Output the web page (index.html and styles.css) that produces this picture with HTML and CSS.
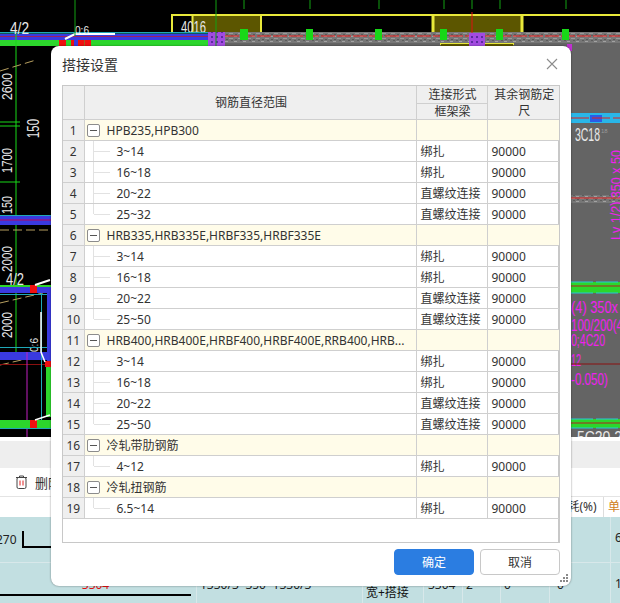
FILE: index.html
```html
<!DOCTYPE html>
<html lang="zh-CN">
<head>
  <meta charset="UTF-8">
  <meta name="viewport" content="width=device-width, initial-scale=1.0">
  <title>搭接设置</title>
  <link rel="stylesheet" href="styles.css">
</head>
<body>
  <div class="app">
    <svg class="cad" width="620" height="437" viewBox="0 0 620 437">
      <defs>
        <pattern id="hatch" width="9" height="5" patternUnits="userSpaceOnUse">
          <rect width="9" height="5" fill="#777"/>
          <rect x="0" y="1" width="3" height="1" fill="#a2a2a2"/>
          <rect x="4" y="3" width="4" height="1" fill="#9a9a9a"/>
          <rect x="6" y="0" width="2" height="1" fill="#5c5c5c"/>
          <rect x="1" y="4" width="2" height="1" fill="#585858"/>
        </pattern>
        <pattern id="violet" width="5" height="5" patternUnits="userSpaceOnUse">
          <rect width="5" height="5" fill="#a24be0"/>
          <rect x="1" y="1" width="2" height="2" fill="#5c2ba0"/>
        </pattern>
      </defs>
      <rect x="0" y="0" width="620" height="437" fill="#000"/>
      <rect x="225" y="43" width="395" height="394" fill="#646464"/>
      <rect x="567" y="44" width="5" height="7" fill="#c030d0"/>

      <!-- top beams -->
      <rect x="262" y="14" width="358" height="2" fill="#e8e83a"/>
      <rect x="171" y="14" width="91" height="2" fill="#e8e83a"/>
      <rect x="193" y="16" width="68" height="16" fill="#5c5600"/>
      <path d="M172 32V15M192.500 32V15M261 32V15" stroke="#e8e83a" stroke-width="2" fill="none"/>
      <rect x="433" y="16" width="89" height="16" fill="#5c5600"/>
      <path d="M433 32V14M522 32V14" stroke="#e8e83a" stroke-width="3" fill="none"/>
      <rect x="440" y="43" width="74" height="2" fill="#e8e83a"/>
      <rect x="441" y="44" width="72" height="2" fill="#5c5600"/>
      <text class="cad-text" x="181" y="33" font-size="16" textLength="25" lengthAdjust="spacingAndGlyphs">4016</text>

      <!-- top left band -->
      <rect x="0" y="32" width="208" height="1.500" fill="#1fa8b8"/>
      <rect x="0" y="34" width="208" height="6" fill="#3a3ae0"/>
      <rect x="0" y="36" width="208" height="1" fill="#a02060"/>
      <rect x="0" y="40" width="208" height="6" fill="#2cd62c"/>
      <rect x="59" y="40" width="32" height="6" fill="#f01010"/>
      <rect x="66" y="40" width="5" height="6" fill="#2cd62c"/>
      <rect x="74" y="40" width="4" height="6" fill="#3a3ae0"/>
      <rect x="84" y="40" width="1" height="6" fill="#a06020"/>
      <path d="M65 39L75 34H115" stroke="#fff" stroke-width="2" fill="none"/>
      <text class="cad-text" x="10" y="34" font-size="17" textLength="19" lengthAdjust="spacingAndGlyphs">4/2</text>
      <text class="cad-text" x="75" y="34" font-size="10" textLength="14" lengthAdjust="spacingAndGlyphs">0:6</text>

      <!-- hatched beam -->
      <rect x="208" y="32" width="17" height="14" fill="url(#violet)"/>
      <rect x="225" y="32" width="395" height="11" fill="url(#hatch)"/>
      <path d="M225 36H620" stroke="#f02020" stroke-width="1" stroke-dasharray="14 2"/>
      <rect x="469" y="33" width="16" height="13" fill="url(#violet)"/>
      <path d="M472 12V33" stroke="#e01010" stroke-width="1"/>
      <g fill="#18d818">
        <rect x="240" y="29" width="8" height="11"/>
        <rect x="306" y="29" width="7" height="11"/>
        <rect x="375" y="29" width="7" height="11"/>
        <rect x="440" y="29" width="7" height="11"/>
        <rect x="496" y="29" width="7" height="11"/>
        <rect x="562" y="29" width="7" height="11"/>
      </g>
      <g stroke="#12a012" stroke-width="1">
        <path d="M75 0V36M216 0V46M244 0V9M310 0V9M379 0V9M444 0V9M472 0V9M500 0V9M566 0V9"/>
      </g>

      <!-- left column -->
      <path d="M16 34V353" stroke="#18d818" stroke-width="1"/>
      <path d="M0 122H20M0 126H20M0 182H20" stroke="#18d818" stroke-width="1"/>
      <rect x="0" y="215" width="51" height="10" fill="#3a3ae0"/>
      <rect x="0" y="215" width="51" height="1" fill="#1fa8b8"/>
      <rect x="0" y="219" width="51" height="2" fill="#7a209a"/>
      <path d="M0 230H51" stroke="#b8a060" stroke-width="1" stroke-dasharray="9 4"/>
      <path d="M0 71L36 60" stroke="#b8a060" stroke-width="1" stroke-dasharray="9 4"/>
      <path d="M0 303L43 293M0 365L30 358" stroke="#b8a060" stroke-width="1" stroke-dasharray="9 4"/>
      <text class="cad-text" transform="translate(12 100) rotate(-90)" font-size="14" textLength="27" lengthAdjust="spacingAndGlyphs">2600</text>
      <text class="cad-text" transform="translate(39 138) rotate(-90)" font-size="17" textLength="19" lengthAdjust="spacingAndGlyphs">150</text>
      <text class="cad-text" transform="translate(12 173) rotate(-90)" font-size="14" textLength="25" lengthAdjust="spacingAndGlyphs">1700</text>
      <text class="cad-text" transform="translate(12 214) rotate(-90)" font-size="14" textLength="18" lengthAdjust="spacingAndGlyphs">150</text>
      <text class="cad-text" transform="translate(12 272) rotate(-90)" font-size="14" textLength="26" lengthAdjust="spacingAndGlyphs">2000</text>
      <text class="cad-text" transform="translate(12 338) rotate(-90)" font-size="14" textLength="26" lengthAdjust="spacingAndGlyphs">2000</text>
      <text class="cad-text" x="6" y="285" font-size="17" textLength="18" lengthAdjust="spacingAndGlyphs">4/2</text>
      <text class="cad-text" transform="translate(38 352) rotate(-90)" font-size="10" textLength="14" lengthAdjust="spacingAndGlyphs">0:6</text>
      <rect x="0" y="285" width="51" height="2" fill="#2cd62c"/>
      <rect x="0" y="287" width="51" height="6" fill="#3a3ae0"/>
      <rect x="0" y="294" width="51" height="1" fill="#1fa8b8"/>
      <rect x="30" y="285" width="7" height="8" fill="#f01010"/>
      <path d="M35 285L50 280" stroke="#fff" stroke-width="2"/>
      <rect x="0" y="347" width="51" height="1" fill="#1fa8b8"/>
      <rect x="0" y="352" width="51" height="8" fill="#3a3ae0"/>
      <rect x="0" y="364" width="51" height="1" fill="#8a1010"/>
      <path d="M41.500 293V420" stroke="#1fa8b8" stroke-width="1"/>
      <rect x="47" y="293" width="4" height="68" fill="#3a3ae0"/>
      <rect x="46" y="367" width="5" height="50" fill="#2cd62c"/>
      <rect x="45" y="361" width="6" height="6" fill="#f01010"/>
      <path d="M41 312V352L45 362" stroke="#fff" stroke-width="1.500" fill="none"/>
      <path d="M27 352V437" stroke="#c020c0" stroke-width="1"/>
      <rect x="0" y="420" width="51" height="8" fill="#2cd62c"/>
      <rect x="0" y="428" width="51" height="1" fill="#1fa8b8"/>
      <rect x="30" y="420" width="7" height="8" fill="#f01010"/>
      <path d="M35 420L50 415" stroke="#fff" stroke-width="1.500"/>

      <!-- right column -->
      <rect x="571" y="113" width="49" height="10" fill="#29b6e8"/>
      <rect x="590" y="115" width="12" height="7" fill="#2a5ce8"/>
      <path d="M571 118H620" stroke="#e02020" stroke-width="1" stroke-dasharray="18 3"/>
      <text class="cad-text" x="575" y="141" font-size="18" textLength="25" lengthAdjust="spacingAndGlyphs">3C18</text>
      <text class="cad-text dim" x="601" y="133" font-size="6">18</text>
      <rect x="571" y="195" width="49" height="8" fill="url(#hatch)"/>
      <path d="M571 198H620" stroke="#e02020" stroke-width="1"/>
      <text class="cad-pink" transform="translate(621 240) rotate(-90)" font-size="14" textLength="90" lengthAdjust="spacingAndGlyphs">Lv 1/2) 350 x 50</text>
      <rect x="571" y="282" width="49" height="11" fill="#2cd62c"/>
      <path d="M571 282H620M571 293H620" stroke="#26c8d8" stroke-width="1" stroke-dasharray="22 3"/>
      <path d="M571 286H620" stroke="#b02020" stroke-width="1"/>
      <text class="cad-pink" x="571" y="313" font-size="17" textLength="47" lengthAdjust="spacingAndGlyphs">(4) 350x</text>
      <text class="cad-pink" x="571" y="331" font-size="17" textLength="52" lengthAdjust="spacingAndGlyphs">100/200(4</text>
      <text class="cad-pink" x="571" y="346" font-size="17" textLength="34" lengthAdjust="spacingAndGlyphs">0;4C20</text>
      <text class="cad-pink" x="571" y="366" font-size="17" textLength="10" lengthAdjust="spacingAndGlyphs">12</text>
      <path d="M571 364H620" stroke="#8a1010" stroke-width="1"/>
      <text class="cad-pink" x="571" y="385" font-size="17" textLength="37" lengthAdjust="spacingAndGlyphs">-0.050)</text>
      <rect x="571" y="419" width="49" height="9" fill="#2cd62c"/>
      <path d="M571 419H620M571 428H620" stroke="#26c8d8" stroke-width="1" stroke-dasharray="22 3"/>
      <path d="M571 423H620" stroke="#b02020" stroke-width="1"/>
      <text class="cad-text" x="577" y="443" font-size="17" textLength="45" lengthAdjust="spacingAndGlyphs">5C20 2</text>
    </svg>

    <div class="tabbar"></div>
    <div class="toolbar">
      <svg class="trash" width="13" height="14" viewBox="0 0 13 14">
        <path d="M1 2.500H12M4.500 2.500V1H8.500V2.500" stroke="#444" fill="none"/>
        <rect x="2" y="2.500" width="9" height="11" rx="1.500" stroke="#444" fill="none"/>
        <path d="M5 5.500V10.500M8 5.500V10.500" stroke="#e02020" fill="none"/>
      </svg>
      <span>删除</span>
    </div>
    <div class="grid-head">
      <span class="c-loss">损耗(%)</span>
      <span class="c-last">单</span>
    </div>
    <div class="grid-row">
      <div class="c-sketch"><span>270</span><i class="elbow"></i></div>
      <div class="c-last c-num">6</div>
    </div>
    <div class="grid-row">
      <div class="c-drawn"><span>3304</span></div>
      <div class="c-size">1330/3*350*1330/3</div>
      <div class="c-type">宽+搭接</div>
      <div class="c-a">3304</div>
      <div class="c-b">2</div>
      <div class="c-c">0</div>
      <div class="c-d">0</div>
      <div class="c-last c-num">1</div>
    </div>
  </div>

  <div class="dialog">
    <div class="dialog-title">
      <span>搭接设置</span>
      <svg class="close" width="12" height="12" viewBox="0 0 12 12">
        <path d="M1 1L11 11M11 1L1 11" stroke="#8c8c8c" stroke-width="1.100" fill="none"/>
      </svg>
    </div>
    <div class="table-wrap">
      <table class="rebar-table">
        <colgroup>
          <col class="col-no"><col class="col-range"><col class="col-type"><col class="col-len">
        </colgroup>
        <thead>
          <tr class="head-top">
            <th rowspan="2"></th>
            <th rowspan="2">钢筋直径范围</th>
            <th>连接形式</th>
            <th rowspan="2">其余钢筋定尺</th>
          </tr>
          <tr class="head-sub"><th>框架梁</th></tr>
        </thead>
        <tbody>
          <tr class="group"><th>1</th><td class="range"><i class="toggle"></i>HPB235,HPB300</td><td></td><td></td></tr>
          <tr><th>2</th><td class="range child">3~14</td><td>绑扎</td><td>90000</td></tr>
          <tr><th>3</th><td class="range child">16~18</td><td>绑扎</td><td>90000</td></tr>
          <tr><th>4</th><td class="range child">20~22</td><td>直螺纹连接</td><td>90000</td></tr>
          <tr><th>5</th><td class="range child last">25~32</td><td>直螺纹连接</td><td>90000</td></tr>
          <tr class="group"><th>6</th><td class="range"><i class="toggle"></i>HRB335,HRB335E,HRBF335,HRBF335E</td><td></td><td></td></tr>
          <tr><th>7</th><td class="range child">3~14</td><td>绑扎</td><td>90000</td></tr>
          <tr><th>8</th><td class="range child">16~18</td><td>绑扎</td><td>90000</td></tr>
          <tr><th>9</th><td class="range child">20~22</td><td>直螺纹连接</td><td>90000</td></tr>
          <tr><th>10</th><td class="range child last">25~50</td><td>直螺纹连接</td><td>90000</td></tr>
          <tr class="group"><th>11</th><td class="range"><i class="toggle"></i>HRB400,HRB400E,HRBF400,HRBF400E,RRB400,HRB...</td><td></td><td></td></tr>
          <tr><th>12</th><td class="range child">3~14</td><td>绑扎</td><td>90000</td></tr>
          <tr><th>13</th><td class="range child">16~18</td><td>绑扎</td><td>90000</td></tr>
          <tr><th>14</th><td class="range child">20~22</td><td>直螺纹连接</td><td>90000</td></tr>
          <tr><th>15</th><td class="range child last">25~50</td><td>直螺纹连接</td><td>90000</td></tr>
          <tr class="group"><th>16</th><td class="range"><i class="toggle"></i>冷轧带肋钢筋</td><td></td><td></td></tr>
          <tr><th>17</th><td class="range child last">4~12</td><td>绑扎</td><td>90000</td></tr>
          <tr class="group"><th>18</th><td class="range"><i class="toggle"></i>冷轧扭钢筋</td><td></td><td></td></tr>
          <tr><th>19</th><td class="range child last">6.5~14</td><td>绑扎</td><td>90000</td></tr>
        </tbody>
      </table>
    </div>
    <div class="dialog-actions">
      <button class="btn btn-primary">确定</button>
      <button class="btn">取消</button>
    </div>
    <svg class="grip" width="8" height="8" viewBox="0 0 8 8">
      <path d="M6 0h2v2H6zM3 3h2v2H3zM6 3h2v2H6zM0 6h2v2H0zM3 6h2v2H3zM6 6h2v2H6z" fill="#8a8a8a"/>
    </svg>
  </div>
</body>
</html>
```

FILE: styles.css
```css
* {
  box-sizing: border-box;
}

body {
  margin: 0;
  width: 620px;
  height: 603px;
  overflow: hidden;
  position: relative;
  font-family: "Noto Sans", "Noto Sans CJK SC", sans-serif;
  font-size: 12px;
  color: #333;
  background-color: #c2dfe1;
}

.app {
  display: flex;
  flex-direction: column;
  width: 620px;
  height: 603px;
  overflow: hidden;
}

.cad {
  display: block;
  flex: none;
}

.cad-text {
  font-family: "Liberation Sans", sans-serif;
  fill: #e8e8e8;
}

.cad-text.dim {
  fill: #999;
}

.cad-pink {
  font-family: "Liberation Sans", sans-serif;
  fill: #f020f0;
}

.tabbar {
  flex: none;
  height: 31px;
  background-color: #eeeeee;
  border-top: 4px solid #fff;
}

.toolbar {
  flex: none;
  display: flex;
  align-items: center;
  gap: 7px;
  height: 29px;
  padding-left: 15px;
  background-color: #fff;
  border-bottom: 1px solid #e4e4e4;
  font-size: 13px;
}

.grid-head {
  flex: none;
  display: flex;
  height: 20px;
  background-color: #fff;
  padding-left: 549px;
  line-height: 20px;
}

.c-loss {
  width: 61px;
  text-align: center;
  border-right: 1px solid #ddd;
}

.c-last {
  padding-left: 4px;
  color: #d08020;
}

.grid-row {
  flex: none;
  position: relative;
  display: flex;
  height: 46px;
  border-bottom: 1px solid #d8e8ea;
  color: #222;
}

.grid-row .c-num {
  margin-left: auto;
  width: 10px;
  padding-left: 4px;
  border-left: 1px solid #d8e8ea;
  color: #222;
  line-height: 42px;
}

.c-sketch {
  display: flex;
  align-items: flex-start;
  width: 197px;
  padding-top: 14px;
  gap: 5px;
  margin-left: -4px;
}

.elbow {
  display: block;
  width: 60px;
  height: 17px;
  border-left: 2px solid #000;
  border-bottom: 2px solid #000;
}

.c-drawn {
  width: 197px;
  padding-right: 5px;
  border-right: 1px solid #d8e8ea;
}

.c-drawn span {
  display: block;
  height: 33px;
  padding-top: 13px;
  text-align: center;
  color: #e01010;
  border-bottom: 2px solid #000;
}

.c-size {
  width: 165px;
  padding: 13px 0 0 3px;
}

.c-type {
  width: 61px;
  padding: 20px 0 0 3px;
  border-left: 1px solid #d8e8ea;
  color: #111;
  white-space: nowrap;
}

.c-a,
.c-b,
.c-c,
.c-d {
  padding-top: 13px;
  border-left: 1px solid #d8e8ea;
}

.c-a { width: 39px; padding-left: 4px; }
.c-b { width: 38px; padding-left: 3px; }
.c-c { width: 49px; padding-left: 3px; }
.c-d { width: 61px; padding-left: 7px; }

.dialog {
  position: absolute;
  left: 51px;
  top: 46px;
  display: flex;
  flex-direction: column;
  width: 520px;
  height: 540px;
  padding: 0 11px;
  background: #fff;
  border-radius: 8px;
  box-shadow: 0 0 2px rgba(0, 0, 0, 0.5);
}

.dialog-title {
  display: flex;
  align-items: center;
  justify-content: space-between;
  flex: none;
  height: 39px;
  padding: 0 2px 4px 0;
  font-size: 14px;
}

.table-wrap {
  flex: none;
  width: 498px;
  height: 458px;
  border: 1px solid #c8c8c8;
  border-right-width: 2px;
}

.rebar-table {
  table-layout: fixed;
  border-collapse: collapse;
  width: 496px;
}

.col-no { width: 21px; }
.col-range { width: 332px; }
.col-type { width: 71px; }
.col-len { width: 72px; }

.rebar-table th,
.rebar-table td {
  padding: 0;
  border: 1px solid #cfcfcf;
  font-weight: normal;
  line-height: 16px;
  white-space: nowrap;
  overflow: hidden;
}

.rebar-table tr > :first-child {
  border-left: none;
}

.rebar-table tr > :last-child {
  border-right: none;
}

.rebar-table thead th {
  padding: 1px 0 0 2px;
  background-color: #efefef;
  text-align: center;
  height: 17px;
  line-height: 15px;
}

.rebar-table .head-sub th {
  height: 16px;
  padding-top: 0;
}

.rebar-table thead tr:first-child th {
  border-top: none;
}

.rebar-table thead th[rowspan] {
  white-space: normal;
  line-height: 16px;
}

.rebar-table tbody tr {
  height: 21px;
}

.rebar-table tbody th {
  padding-top: 1px;
  background-color: #efefef;
  text-align: center;
}

.rebar-table tbody td {
  padding: 1px 0 0 4px;
}

.group td {
  background-color: #fffce9;
}

.rebar-table .range {
  position: relative;
  padding-left: 22px;
}

.rebar-table .child {
  padding-left: 32px;
}

.child::before {
  content: "";
  position: absolute;
  left: 8px;
  top: 0;
  bottom: 0;
  border-left: 1px solid #e2e2e2;
}

.child.last::before {
  bottom: 10px;
}

.child::after {
  content: "";
  position: absolute;
  left: 9px;
  top: 10px;
  width: 16px;
  border-top: 1px solid #e2e2e2;
}

.toggle {
  position: absolute;
  left: 2px;
  top: 4px;
  width: 13px;
  height: 13px;
  background-color: #fff;
  border: 1px solid #8c8c8c;
  border-radius: 2px;
}

.toggle::after {
  content: "";
  position: absolute;
  left: 2px;
  top: 5px;
  width: 7px;
  border-top: 1px solid #555;
}

.dialog-actions {
  display: flex;
  justify-content: flex-end;
  gap: 6px;
  margin-top: 6px;
}

.btn {
  width: 80px;
  height: 26px;
  padding: 0;
  font: inherit;
  color: #333;
  background: #fff;
  border: 1px solid #c8c8c8;
  border-radius: 4px;
}

.btn-primary {
  color: #fff;
  background-color: #2b7de1;
  border-color: #2b7de1;
}

.grip {
  position: absolute;
  right: 3px;
  bottom: 4px;
}
```
